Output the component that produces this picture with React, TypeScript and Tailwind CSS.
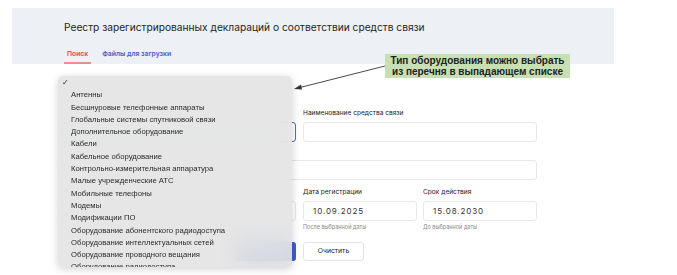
import React from 'react';

const equipmentTypes = [
  'Антенны',
  'Бесшнуровые телефонные аппараты',
  'Глобальные системы спутниковой связи',
  'Дополнительное оборудование',
  'Кабели',
  'Кабельное оборудование',
  'Контрольно-измерительная аппаратура',
  'Малые учрежденческие АТС',
  'Мобильные телефоны',
  'Модемы',
  'Модификации ПО',
  'Оборудование абонентского радиодоступа',
  'Оборудование интеллектуальных сетей',
  'Оборудование проводного вещания',
  'Оборудование радиодоступа',
];

function Field({ label, value, hint, active }: { label?: string; value?: string; hint?: string; active?: boolean }) {
  return (
    <div className="flex flex-col">
      <div className="h-[10px] mb-[4px] text-[6.6px] leading-[10px] text-[#222]">{label}</div>
      <div
        className={`h-[20px] rounded-[3px] bg-white flex items-center px-[9px] text-[8px] tracking-[0.9px] text-[#333] ${
          active ? 'border border-[#4a6fd8]' : 'border border-[#e6e8ec]'
        }`}
      >
        {value}
      </div>
      {hint && <div className="mt-[3px] h-[7px] text-[5.5px] leading-[7px] text-[#888]">{hint}</div>}
    </div>
  );
}

export default function App() {
  return (
    <div className="relative w-[677px] h-[275px] overflow-hidden bg-white font-['Inter','Noto_Sans',sans-serif]">
      {/* шапка реестра */}
      <div className="mt-[8px] ml-[12px] w-[602px] h-[56px] bg-[#edf0f5] pl-[52px] flex flex-col">
        <div className="pt-[12px] text-[10.2px] leading-[14px] text-[#1f1f1f]">
          Реестр зарегистрированных деклараций о соответствии средств связи
        </div>
        <div className="mt-auto flex items-end gap-[11px] text-[6.8px] font-semibold">
          <div className="px-[3px] pb-[3px] border-b-2 border-[#f28b8b] text-[#e5484d]">Поиск</div>
          <div className="pb-[5px] text-[#4a5bc4]">Файлы для загрузки</div>
        </div>
      </div>

      {/* форма поиска */}
      <div className="ml-[62px] mt-[44px] w-[475px] grid grid-cols-2 gap-x-[7px]">
        <Field active />
        <Field label="Наименование средства связи" />
        <div className="col-span-2 mt-[18px]">
          <div className="h-[20px] rounded-[3px] border border-[#e6e8ec] bg-white" />
        </div>
        <div className="mt-[7px]">
          <Field />
        </div>
        <div className="mt-[7px] grid grid-cols-2 gap-x-[6px]">
          <Field label="Дата регистрации" value="10.09.2025" hint="После выбранной даты" />
          <Field label="Срок действия" value="15.08.2030" hint="До выбранной даты" />
        </div>
        <div className="mt-[11px] flex justify-end">
          <div className="w-[60px] h-[19px] rounded-[3px] bg-[#3e5fc8]" />
        </div>
        <div className="mt-[11px] flex">
          <div className="w-[61px] h-[19px] rounded-[3px] border border-[#e3e5ea] bg-white text-[6.8px] text-[#222] flex items-center justify-center">
            Очистить
          </div>
        </div>
      </div>

      {/* выпадающий список */}
      <div className="absolute left-[58px] top-[76px] w-[234px] h-[191px] overflow-hidden rounded-[5px] bg-[#e3e3e3]/90 backdrop-blur-md shadow-[0_2px_8px_rgba(0,0,0,0.18)] pt-[1px] font-['Liberation_Sans',sans-serif] text-[7.7px] text-[#2a2a2a]">
        <div className="h-[12.3px] leading-[12.3px] pl-[4px] text-[8px]">✓</div>
        {equipmentTypes.map((t) => (
          <div key={t} className="h-[12.3px] leading-[12.3px] pl-[13px] whitespace-nowrap">
            {t}
          </div>
        ))}
      </div>

      {/* стрелка-указатель */}
      <svg className="absolute left-[290px] top-[60px]" width="100" height="34" viewBox="0 0 100 34">
        <line x1="95" y1="6" x2="8" y2="28" stroke="#333" strokeWidth="0.9" />
        <path d="M4 29 L11 24.5 L12 29.5 Z" fill="#333" />
      </svg>

      {/* подсказка */}
      <div className="absolute left-[385px] top-[54px] w-[185px] h-[24px] bg-[#c6e0b4] font-['Liberation_Sans',sans-serif] font-bold text-[10px] leading-[11px] text-[#222] text-center flex flex-col justify-center">
        <div>Тип оборудования можно выбрать</div>
        <div>из перечня в выпадающем списке</div>
      </div>
    </div>
  );
}
